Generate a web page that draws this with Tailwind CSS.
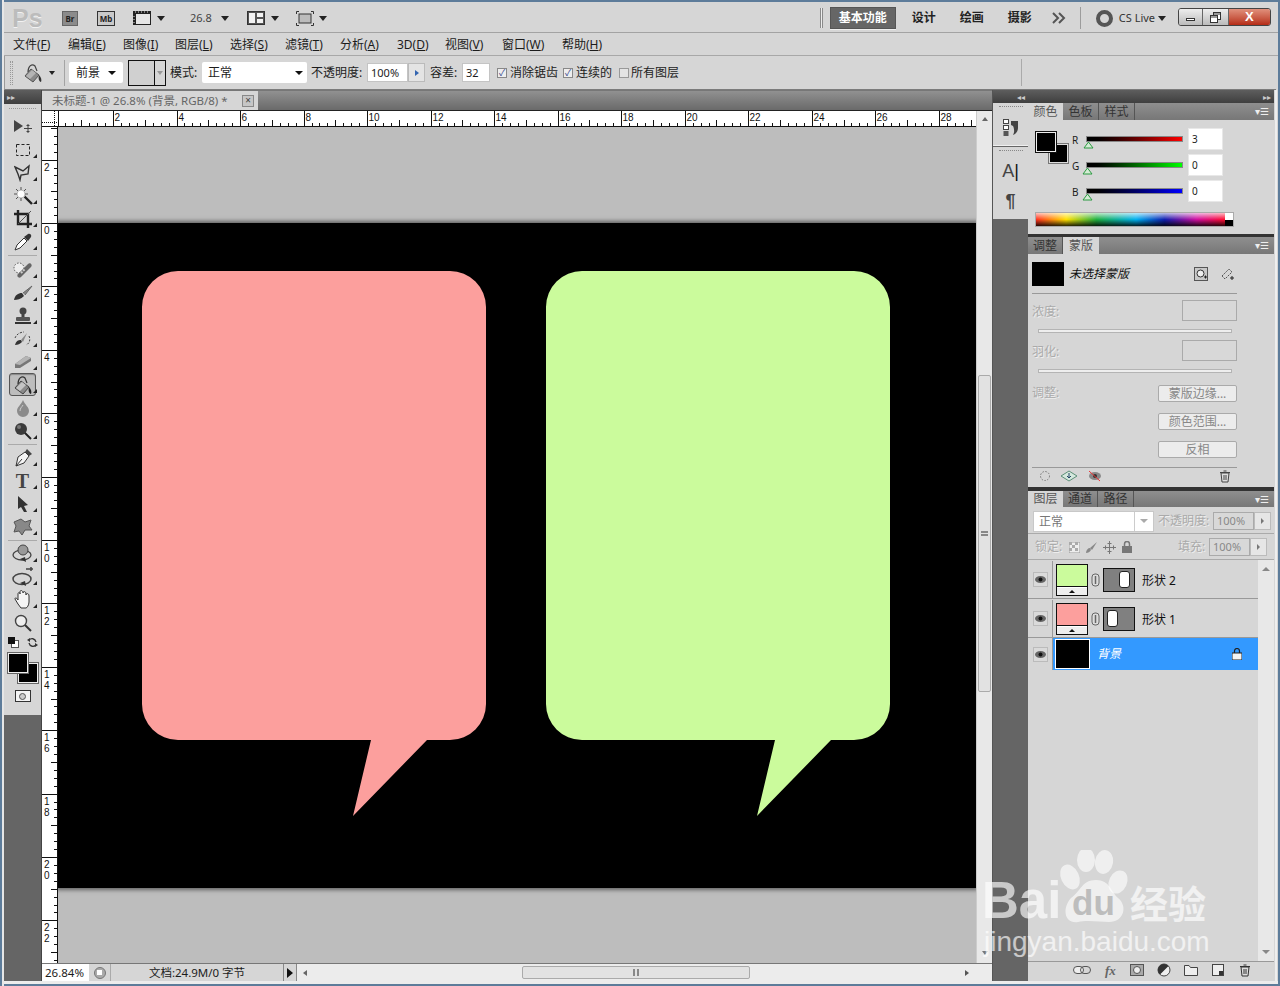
<!DOCTYPE html>
<html lang="zh-CN">
<head>
<meta charset="UTF-8" />
<title>Photoshop CS5</title>
<script src="https://cdn.jsdelivr.net/npm/@tailwindcss/browser@4"></script>
</head>
<body class="m-0 overflow-hidden">
<div class="relative w-[1280px] h-[986px] overflow-hidden flex flex-col bg-[#d6d6d6] text-[12px] text-[#1c1c1c] font-['Noto_Sans','Noto_Sans_CJK_SC',sans-serif]">

  <!-- title bar -->
  <div class="h-[33px] shrink-0 flex items-center border-t-2 border-t-[#5d7c9a] border-b border-b-[#a3a3a3] pl-[12px] pt-[2px]">
    <span class="w-[50px] text-[25px] leading-none font-bold text-[#bcbcbc] font-['Liberation_Sans',sans-serif] [text-shadow:0_1px_0_#f2f2f2]">Ps</span>
    <span class="w-[16px] h-[15px] bg-[#8b8b8b] border border-[#666] text-[8px] leading-[13px] font-bold text-center text-[#222]">Br</span>
    <span class="ml-[19px] w-[18px] h-[15px] bg-[#c9c9c9] border border-[#333] text-[8px] leading-[13px] font-bold text-center text-[#222]">Mb</span>
    <svg class="ml-[18px]" width="18" height="14" viewBox="0 0 18 14"><rect x="0.5" y="0.5" width="17" height="13" fill="#e6e6e6" stroke="#222"/><rect x="0" y="0" width="18" height="3" fill="#222"/><rect x="0" y="3" width="3" height="11" fill="#222"/><path d="M2 1h1M5 1h1M8 1h1M11 1h1M14 1h1M1 5v1M1 8v1M1 11v1" stroke="#ddd"/></svg>
    <span class="ml-[6px] w-0 h-0 border-x-[4px] border-x-transparent border-t-[5px] border-t-[#222]"></span>
    <span class="ml-[25px] text-[11px] text-[#444]">26.8</span>
    <span class="ml-[9px] w-0 h-0 border-x-[4px] border-x-transparent border-t-[5px] border-t-[#222]"></span>
    <svg class="ml-[18px]" width="18" height="14" viewBox="0 0 18 14"><rect x="0.5" y="0.5" width="17" height="13" fill="#555" stroke="#333"/><rect x="2" y="2" width="6" height="10" fill="#f2f2f2"/><rect x="10" y="2" width="6" height="4" fill="#f2f2f2"/><rect x="10" y="8" width="6" height="4" fill="#f2f2f2"/></svg>
    <span class="ml-[6px] w-0 h-0 border-x-[4px] border-x-transparent border-t-[5px] border-t-[#222]"></span>
    <svg class="ml-[17px]" width="18" height="15" viewBox="0 0 18 15"><path d="M0.5 3V0.5H3M15 0.5h2.5V3M17.5 12v2.5H15M3 14.5H0.5V12" fill="none" stroke="#333"/><rect x="3" y="3" width="12" height="9" fill="#bcbcbc" stroke="#333"/></svg>
    <span class="ml-[5px] w-0 h-0 border-x-[4px] border-x-transparent border-t-[5px] border-t-[#222]"></span>

    <span class="ml-[493px] w-[3px] h-[20px] border-x border-x-[#8a8a8a] bg-[#eee]"></span>
    <span class="ml-[7px] w-[66px] h-[22px] bg-[#666] border border-[#555] text-white font-bold text-center leading-[20px] shadow-[0_1px_0_#eee]">基本功能</span>
    <span class="ml-[16px] w-[24px] font-bold text-[#222]">设计</span>
    <span class="ml-[24px] w-[24px] font-bold text-[#222]">绘画</span>
    <span class="ml-[24px] w-[24px] font-bold text-[#222]">摄影</span>
    <svg class="ml-[20px]" width="14" height="12" viewBox="0 0 14 12"><path d="M1 1l5 5-5 5M7 1l5 5-5 5" fill="none" stroke="#555" stroke-width="2"/></svg>
    <span class="ml-[14px] w-px h-[22px] bg-[#9c9c9c]"></span>
    <span class="ml-[15px] w-[17px] h-[17px] rounded-full border-[4px] border-[#555] bg-[#d6d6d6]"></span>
    <span class="ml-[6px] w-[38px] text-[11px] text-[#333] whitespace-nowrap">CS Live</span>
    <span class="ml-[1px] w-0 h-0 border-x-[4px] border-x-transparent border-t-[5px] border-t-[#222]"></span>
    <div class="ml-[12px] w-[93px] h-[18px] mt-[-2px] flex rounded-[3px] border border-[#444] overflow-hidden">
      <span class="w-[24px] flex items-end justify-center pb-[4px] bg-gradient-to-b from-[#eee] to-[#bbb] border-r border-r-[#666]"><span class="w-[9px] h-[3px] border border-[#333] bg-white"></span></span>
      <span class="w-[26px] flex items-center justify-center bg-gradient-to-b from-[#eee] to-[#bbb] border-r border-r-[#666]"><svg width="11" height="11" viewBox="0 0 11 11"><rect x="3.5" y="0.5" width="7" height="7" fill="#fff" stroke="#333"/><rect x="0.5" y="3.5" width="7" height="7" fill="#fff" stroke="#333"/><path d="M1 5h6M4 2h6" stroke="#333"/></svg></span>
      <span class="flex-1 text-center text-white font-bold text-[13px] leading-[16px] bg-gradient-to-b from-[#e0907c] to-[#b52a14] font-['Liberation_Sans',sans-serif]">X</span>
    </div>
  </div>

  <!-- menu bar -->
  <div class="h-[23px] shrink-0 flex items-center pl-[13px] pt-[2px] border-b border-b-[#a8a8a8] whitespace-nowrap">
    <span class="w-[55px]">文件(<u>F</u>)</span>
    <span class="w-[55px]">编辑(<u>E</u>)</span>
    <span class="w-[52px]">图像(<u>I</u>)</span>
    <span class="w-[55px]">图层(<u>L</u>)</span>
    <span class="w-[55px]">选择(<u>S</u>)</span>
    <span class="w-[55px]">滤镜(<u>T</u>)</span>
    <span class="w-[57px]">分析(<u>A</u>)</span>
    <span class="w-[48px]">3D(<u>D</u>)</span>
    <span class="w-[57px]">视图(<u>V</u>)</span>
    <span class="w-[60px]">窗口(<u>W</u>)</span>
    <span>帮助(<u>H</u>)</span>
  </div>

  <!-- options bar -->
  <div class="h-[34px] shrink-0 ml-[4px] mr-[4px] flex items-center border-l border-l-[#9a9a9a] border-b border-b-[#7c7c7c] whitespace-nowrap">
    <span class="ml-[5px] w-[3px] h-[24px] border-x border-dotted border-[#999]"></span>
    <svg class="ml-[10px]" width="20" height="20" viewBox="0 0 20 20"><path d="M8 6 L16 12 L10 19 L2 13Z" fill="#8a8a8a" stroke="#555"/><path d="M3 13 L9 7 L13 10 L7 16Z" fill="#b4b4b4"/><path d="M5 9 C5 3 9 0 12 3 L14 8" fill="none" stroke="#444" stroke-width="1.2"/><path d="M16 12 C18 14 19 17 18 19 C16 19 15 15 16 12Z" fill="#333"/></svg>
    <span class="ml-[6px] w-0 h-0 border-x-[3px] border-x-transparent border-t-[4px] border-t-[#222]"></span>
    <span class="ml-[9px] w-px h-[26px] bg-[#a4a4a4]"></span>
    <div class="ml-[4px] w-[54px] h-[21px] bg-white rounded-[2px] flex items-center justify-between pl-[7px] pr-[7px]"><span>前景</span><span class="w-0 h-0 border-x-[4px] border-x-transparent border-t-[4px] border-t-[#111]"></span></div>
    <div class="ml-[5px] w-[38px] h-[26px] border border-[#111] flex"><span class="w-[26px] h-full bg-[#d0d0d0] border-r border-r-[#111]"></span><span class="flex-1 flex items-center justify-center"><span class="w-0 h-0 border-x-[3px] border-x-transparent border-t-[4px] border-t-[#999]"></span></span></div>
    <span class="ml-[4px] w-[32px]">模式:</span>
    <div class="w-[105px] h-[21px] bg-white rounded-[2px] flex items-center justify-between pl-[6px] pr-[4px]"><span>正常</span><span class="w-0 h-0 border-x-[4px] border-x-transparent border-t-[4px] border-t-[#111]"></span></div>
    <span class="ml-[4px] w-[56px]">不透明度:</span>
    <div class="w-[41px] h-[19px] bg-white border border-[#c4c4c4] text-[11px] leading-[17px] pl-[3px]">100%</div>
    <div class="w-[17px] h-[19px] bg-[#e4e4e4] border border-[#bbb] flex items-center justify-center"><span class="w-0 h-0 border-y-[3px] border-y-transparent border-l-[4px] border-l-[#3465b0]"></span></div>
    <span class="ml-[5px] w-[32px]">容差:</span>
    <div class="w-[28px] h-[19px] bg-white border border-[#c4c4c4] text-[11px] leading-[17px] pl-[3px]">32</div>
    <span class="ml-[7px] w-[10px] h-[10px] bg-[#eee] border border-[#888] text-[#33478f] text-[9px] leading-[8px] text-center">✓</span>
    <span class="ml-[3px] w-[47px]">消除锯齿</span>
    <span class="ml-[6px] w-[10px] h-[10px] bg-[#eee] border border-[#888] text-[#33478f] text-[9px] leading-[8px] text-center">✓</span>
    <span class="ml-[3px] w-[36px]">连续的</span>
    <span class="ml-[7px] w-[10px] h-[10px] bg-[#e4e4e4] border border-[#999]"></span>
    <span class="ml-[2px] w-[49px]">所有图层</span>
    <span class="ml-[341px] w-px h-[27px] bg-[#aaa]"></span>
  </div>

  <!-- work area -->
  <div class="h-[891px] shrink-0 flex ml-[4px]">

    <!-- tools -->
    <div class="w-[38px] shrink-0 flex flex-col bg-[#656565] border-r border-r-[#444]">
      <div class="h-[14px] shrink-0 bg-gradient-to-b from-[#5e5e5e] to-[#3f3f3f] text-[#ccc] text-[8px] leading-[13px] pl-[3px]">▸▸</div>
      <div class="h-[611px] shrink-0 bg-[#d6d6d6] flex flex-col">
        <div class="h-[11px] shrink-0 mx-[5px] pt-[4px]"><div class="border-t border-dotted border-t-[#999]"></div></div>
        <div class="h-[23px] shrink-0 flex items-center justify-center relative"><svg width="20" height="16" viewBox="0 0 20 16"><path d="M1 1 L10 7 L1 13Z" fill="#444"/><path d="M15 5v9M11 9.5h8M13.5 6.5h3M13.5 12.5h3" stroke="#444" fill="none"/></svg></div>
        <div class="h-[23px] shrink-0 flex items-center justify-center relative"><svg width="16" height="14" viewBox="0 0 16 14"><rect x="1.5" y="1.5" width="13" height="11" fill="none" stroke="#222" stroke-dasharray="3 2"/></svg><i class="absolute right-[4px] bottom-[3px] border-b-[4px] border-l-[4px] border-b-[#222] border-l-transparent"></i></div>
        <div class="h-[23px] shrink-0 flex items-center justify-center relative"><svg width="18" height="18" viewBox="0 0 18 18"><path d="M1 3 L9 7 L15 2 L14 10 L7 11 L6 16 L4 10Z" fill="none" stroke="#333" stroke-width="1.4"/></svg><i class="absolute right-[4px] bottom-[3px] border-b-[4px] border-l-[4px] border-b-[#222] border-l-transparent"></i></div>
        <div class="h-[23px] shrink-0 flex items-center justify-center relative"><svg width="20" height="20" viewBox="0 0 20 20"><path d="M11 10 L19 18" stroke="#222" stroke-width="2.4"/><circle cx="8" cy="8" r="4" fill="#fff" stroke="#bbb"/><path d="M8 1v3M8 12v3M1 8h3M12 8h3M3 3l2 2M13 3l-2 2M3 13l2-2" stroke="#555"/></svg><i class="absolute right-[4px] bottom-[3px] border-b-[4px] border-l-[4px] border-b-[#222] border-l-transparent"></i></div>
        <div class="h-[23px] shrink-0 flex items-center justify-center relative"><svg width="18" height="18" viewBox="0 0 18 18"><path d="M4 0v14h14M0 4h14v14" fill="none" stroke="#222" stroke-width="2.4"/><path d="M4 14 L17 1" stroke="#555"/></svg><i class="absolute right-[4px] bottom-[3px] border-b-[4px] border-l-[4px] border-b-[#222] border-l-transparent"></i></div>
        <div class="h-[23px] shrink-0 flex items-center justify-center relative"><svg width="18" height="18" viewBox="0 0 18 18"><path d="M1 17 L3 12 L10 5 L13 8 L6 15Z" fill="#fff" stroke="#333"/><path d="M10 4 L14 8 L17 4 C18 2 16 0 14 1Z" fill="#333"/></svg><i class="absolute right-[4px] bottom-[3px] border-b-[4px] border-l-[4px] border-b-[#222] border-l-transparent"></i></div>
        <div class="h-[5px] shrink-0 flex items-center px-[4px]"><span class="h-px w-full bg-[#aaa]"></span></div>
        <div class="h-[23px] shrink-0 flex items-center justify-center relative"><svg width="20" height="18" viewBox="0 0 20 18"><circle cx="6" cy="7" r="5" fill="#eee" stroke="#555" stroke-dasharray="1.5 1.5"/><path d="M5 13 L15 3 C17 1 20 4 18 6 L8 16 C6 18 3 15 5 13Z" fill="#666"/><path d="M8 12l4-4" stroke="#ccc" stroke-width="2" stroke-dasharray="2 1"/></svg><i class="absolute right-[4px] bottom-[3px] border-b-[4px] border-l-[4px] border-b-[#222] border-l-transparent"></i></div>
        <div class="h-[23px] shrink-0 flex items-center justify-center relative"><svg width="20" height="16" viewBox="0 0 20 16"><path d="M1 15 C2 10 5 8 9 8 L11 11 C8 14 4 15 1 15Z" fill="#333"/><path d="M10 8 L19 1 L12 10" fill="#888" stroke="#666"/></svg><i class="absolute right-[4px] bottom-[3px] border-b-[4px] border-l-[4px] border-b-[#222] border-l-transparent"></i></div>
        <div class="h-[23px] shrink-0 flex items-center justify-center relative"><svg width="18" height="18" viewBox="0 0 18 18"><circle cx="9" cy="4" r="3.5" fill="#444"/><rect x="7.5" y="6" width="3" height="5" fill="#444"/><rect x="2" y="10" width="14" height="4" rx="1" fill="#555"/><rect x="1" y="15" width="16" height="2" fill="#333"/></svg><i class="absolute right-[4px] bottom-[3px] border-b-[4px] border-l-[4px] border-b-[#222] border-l-transparent"></i></div>
        <div class="h-[23px] shrink-0 flex items-center justify-center relative"><svg width="18" height="16" viewBox="0 0 18 16"><path d="M1 14 C2 10 4 9 7 9 L8 11 C6 13 4 14 1 14Z" fill="#333"/><path d="M7 9 L13 2 L9 11" fill="#888"/><path d="M1 7 C3 2 8 1 10 1M15 5 C17 9 15 13 12 14" fill="none" stroke="#444" stroke-dasharray="2 1.5"/></svg><i class="absolute right-[4px] bottom-[3px] border-b-[4px] border-l-[4px] border-b-[#222] border-l-transparent"></i></div>
        <div class="h-[23px] shrink-0 flex items-center justify-center relative"><svg width="18" height="14" viewBox="0 0 18 14"><path d="M1 9 L12 1 L17 3 L17 6 L6 13 L1 13Z" fill="#777"/><path d="M1 9 L12 1 L17 3 L6 10Z" fill="#b5b5b5"/></svg><i class="absolute right-[4px] bottom-[3px] border-b-[4px] border-l-[4px] border-b-[#222] border-l-transparent"></i></div>
        <div class="h-[23px] shrink-0 flex items-center justify-center relative"><span class="absolute inset-x-[5px] inset-y-0 border border-[#555] rounded-[3px] bg-[#bdbdbd] shadow-[inset_0_1px_1px_#888]"></span><svg class="relative" width="20" height="20" viewBox="0 0 20 20"><path d="M8 6 L16 12 L10 19 L2 13Z" fill="#8a8a8a" stroke="#444"/><path d="M3 13 L9 7 L13 10 L7 16Z" fill="#c4c4c4"/><path d="M5 9 C5 3 9 0 12 3 L14 8" fill="none" stroke="#333" stroke-width="1.2"/><path d="M16 12 C18 14 19 17 18 19 C16 19 15 15 16 12Z" fill="#222"/></svg><i class="absolute right-[4px] bottom-[3px] border-b-[4px] border-l-[4px] border-b-[#222] border-l-transparent"></i></div>
        <div class="h-[23px] shrink-0 flex items-center justify-center relative"><svg width="14" height="18" viewBox="0 0 14 18"><path d="M7 1 C9 6 13 8 13 12 A6 6 0 0 1 1 12 C1 8 5 6 7 1Z" fill="#8b8b8b"/><path d="M4 12 C4 9 6 8 7 6" stroke="#ccc" fill="none"/></svg><i class="absolute right-[4px] bottom-[3px] border-b-[4px] border-l-[4px] border-b-[#222] border-l-transparent"></i></div>
        <div class="h-[23px] shrink-0 flex items-center justify-center relative"><svg width="18" height="18" viewBox="0 0 18 18"><path d="M10 10 L17 17" stroke="#222" stroke-width="2"/><circle cx="7" cy="7" r="6" fill="#3b3b3b"/><circle cx="5" cy="5" r="2" fill="#777"/></svg><i class="absolute right-[4px] bottom-[3px] border-b-[4px] border-l-[4px] border-b-[#222] border-l-transparent"></i></div>
        <div class="h-[4px] shrink-0 flex items-center px-[4px]"><span class="h-px w-full bg-[#aaa]"></span></div>
        <div class="h-[23px] shrink-0 flex items-center justify-center relative"><svg width="18" height="18" viewBox="0 0 18 18"><path d="M2 17 L4 8 L11 3 L15 7 L10 14Z" fill="#f3f3f3" stroke="#333"/><path d="M2 17 L8 10" stroke="#333"/><path d="M11 3 L13 0 L18 5 L15 7Z" fill="#444"/></svg><i class="absolute right-[4px] bottom-[3px] border-b-[4px] border-l-[4px] border-b-[#222] border-l-transparent"></i></div>
        <div class="h-[23px] shrink-0 flex items-center justify-center relative"><span class="text-[20px] leading-none font-bold text-[#444] font-['Liberation_Serif',serif]">T</span><i class="absolute right-[4px] bottom-[3px] border-b-[4px] border-l-[4px] border-b-[#222] border-l-transparent"></i></div>
        <div class="h-[23px] shrink-0 flex items-center justify-center relative"><svg width="14" height="18" viewBox="0 0 14 18"><path d="M2 1 L12 10 L8 11 L11 17 L8 17 L5 12 L2 14Z" fill="#333"/></svg><i class="absolute right-[4px] bottom-[3px] border-b-[4px] border-l-[4px] border-b-[#222] border-l-transparent"></i></div>
        <div class="h-[23px] shrink-0 flex items-center justify-center relative"><svg width="20" height="18" viewBox="0 0 20 18"><path d="M8 1 L12 4 L18 2 L16 8 L19 12 L12 12 L9 17 L6 13 L1 14 L3 8 L1 4Z" fill="#888" stroke="#555"/></svg><i class="absolute right-[4px] bottom-[3px] border-b-[4px] border-l-[4px] border-b-[#222] border-l-transparent"></i></div>
        <div class="h-[4px] shrink-0 flex items-center px-[4px]"><span class="h-px w-full bg-[#aaa]"></span></div>
        <div class="h-[23px] shrink-0 flex items-center justify-center relative"><svg width="22" height="20" viewBox="0 0 22 20"><ellipse cx="10" cy="11" rx="9" ry="5" fill="none" stroke="#444" stroke-width="1.3"/><circle cx="11" cy="6" r="5" fill="#999" stroke="#444"/><path d="M8 15l6 3-1-5z" fill="#333"/></svg><i class="absolute right-[4px] bottom-[3px] border-b-[4px] border-l-[4px] border-b-[#222] border-l-transparent"></i></div>
        <div class="h-[23px] shrink-0 flex items-center justify-center relative"><svg width="22" height="20" viewBox="0 0 22 20"><ellipse cx="10" cy="12" rx="9" ry="5.5" fill="none" stroke="#444" stroke-width="1.5"/><path d="M14 2h7M19 0v4" stroke="#444" stroke-width="1.5"/><path d="M8 16l6 3-1-5z" fill="#333"/></svg><i class="absolute right-[4px] bottom-[3px] border-b-[4px] border-l-[4px] border-b-[#222] border-l-transparent"></i></div>
        <div class="h-[23px] shrink-0 flex items-center justify-center relative"><svg width="18" height="20" viewBox="0 0 18 20"><path d="M4 14 L1 9 C1 7 3 8 4 10 L4 4 C4 2 6 2 6 4 L6 2 C6 0 8 0 9 2 L9 3 C9 1 12 1 12 4 L12 5 C12 3 15 3 15 6 L15 12 C15 15 13 18 12 18 L7 18Z" fill="#f4f4f4" stroke="#333"/></svg><i class="absolute right-[4px] bottom-[3px] border-b-[4px] border-l-[4px] border-b-[#222] border-l-transparent"></i></div>
        <div class="h-[23px] shrink-0 flex items-center justify-center"><svg width="18" height="18" viewBox="0 0 18 18"><circle cx="7" cy="7" r="5.5" fill="#eee" stroke="#444" stroke-width="1.4"/><path d="M11 11 L17 17" stroke="#333" stroke-width="2"/></svg></div>
        <div class="h-[16px] shrink-0 flex items-center pl-[4px] gap-[8px]">
          <svg width="11" height="11" viewBox="0 0 11 11"><rect x="3.5" y="3.5" width="7" height="7" fill="#fff" stroke="#555"/><rect x="0" y="0" width="7" height="7" fill="#111"/></svg>
          <svg width="11" height="11" viewBox="0 0 11 11"><path d="M2 3 C4 1 8 1 9 5M9 8 C7 10 3 10 2 6" fill="none" stroke="#333" stroke-width="1.3"/><path d="M0 3l3-2v4zM11 8l-3 2V6z" fill="#333"/></svg>
        </div>
        <div class="relative h-[35px] shrink-0">
          <span class="absolute left-[14px] top-[13px] w-[20px] h-[20px] bg-black border border-[#eee] outline outline-[#666]"></span>
          <span class="absolute left-[4px] top-[3px] w-[20px] h-[20px] bg-black border border-[#eee] outline outline-[#666]"></span>
        </div>
        <div class="h-[22px] shrink-0 flex items-start justify-center pt-[5px]"><span class="w-[16px] h-[12px] bg-[#f4f4f4] border border-[#333] flex items-center justify-center"><span class="w-[7px] h-[7px] rounded-full border border-[#555] bg-[#ccc]"></span></span></div>
      </div>
    </div>

    <!-- document -->
    <div class="w-[950px] shrink-0 flex flex-col">
      <div class="h-[20px] shrink-0 flex items-end bg-gradient-to-b from-[#919191] to-[#6a6a6a] border-t border-t-[#777]">
        <div class="w-[216px] h-[19px] bg-[#d6d6d6] flex items-center pl-[10px] text-[11.5px] text-[#666] whitespace-nowrap">
          <span class="w-[190px]">未标题-1 @ 26.8% (背景, RGB/8) *</span>
          <span class="w-[12px] h-[12px] bg-[#c6c6c6] border border-[#888] text-[#444] text-[10px] leading-[9px] text-center">×</span>
        </div>
      </div>
      <div class="h-[17px] shrink-0 flex bg-white border-t border-t-[#222]">
        <svg id="rulerX" width="934" height="16" class="block"></svg>
        <div class="w-[16px] bg-[#e8e8e8] flex justify-center pt-[6px] border-l border-l-[#ccc]"><span class="w-0 h-0 border-x-[3px] border-x-transparent border-b-[4px] border-b-[#666]"></span></div>
      </div>
      <div class="flex h-[836px] shrink-0">
        <svg id="rulerY" width="16" height="836" class="block shrink-0 bg-white"></svg>
        <!-- canvas -->
        <div class="w-[918px] shrink-0 flex flex-col bg-[#bdbdbd] overflow-hidden">
          <div class="h-[96px] shrink-0"></div>
          <div class="h-[665px] shrink-0 bg-black shadow-[0_0_4px_2px_rgba(70,70,70,0.75)]">
            <svg width="918" height="665" viewBox="0 0 918 665" class="block">
              <path d="M120 48H392A36 36 0 0 1 428 84V481A36 36 0 0 1 392 517H369L295 593L313 517H120A36 36 0 0 1 84 481V84A36 36 0 0 1 120 48Z" fill="#fc9f9d"/>
              <path d="M524 48H796A36 36 0 0 1 832 84V481A36 36 0 0 1 796 517H773L699 593L717 517H524A36 36 0 0 1 488 481V84A36 36 0 0 1 524 48Z" fill="#cbfb9c"/>
            </svg>
          </div>
        </div>
        <!-- v scrollbar -->
        <div class="w-[16px] shrink-0 flex flex-col items-center bg-[#e8e8e8] border-l border-l-[#ccc]">
          <div class="w-[13px] mt-[248px] h-[317px] shrink-0 bg-[#e2e2e2] border border-[#aaa] rounded-[2px] flex items-center justify-center"><span class="w-[7px] h-[5px] border-y-2 border-y-[#888]"></span></div>
          <span class="mt-[259px] w-0 h-0 border-x-[3px] border-x-transparent border-t-[4px] border-t-[#777]"></span>
        </div>
      </div>
      <!-- status bar -->
      <div class="h-[18px] shrink-0 flex border-t border-t-[#777] text-[11.5px] leading-[17px]">
        <span class="w-[47px] bg-white pl-[3px]">26.84%</span>
        <span class="w-[22px] flex items-center justify-center border-r border-r-[#aaa]"><span class="w-[12px] h-[12px] rounded-full bg-[#aaa] border border-[#777] flex items-center justify-center"><span class="w-[5px] h-[5px] bg-white"></span></span></span>
        <span class="w-[172px] text-center">文档:24.9M/0 字节</span>
        <span class="w-[14px] flex items-center justify-center border-x border-x-[#888]"><span class="w-0 h-0 border-y-[5px] border-y-transparent border-l-[6px] border-l-[#111]"></span></span>
        <div class="w-[695px] flex items-center bg-[#ececec]">
          <span class="ml-[6px] w-0 h-0 border-y-[3px] border-y-transparent border-r-[4px] border-r-[#666]"></span>
          <div class="ml-[215px] w-[228px] h-[13px] bg-[#e2e2e2] border border-[#aaa] rounded-[2px] flex items-center justify-center"><span class="w-[6px] h-[7px] border-x-2 border-x-[#888]"></span></div>
          <span class="ml-[215px] w-0 h-0 border-y-[3px] border-y-transparent border-l-[4px] border-l-[#555]"></span>
        </div>
      </div>
    </div>

    <!-- dock -->
    <div class="w-[36px] shrink-0 flex flex-col bg-[#656565] border-l border-l-[#555]">
      <div class="h-[13px] shrink-0 bg-gradient-to-b from-[#5e5e5e] to-[#3f3f3f] text-[#ccc] text-[8px] leading-[13px] text-right pr-[3px]">◂◂</div>
      <div class="h-[43px] shrink-0 bg-[#d6d6d6] border-b border-b-[#f0f0f0] flex flex-col items-center">
        <span class="w-[24px] mt-[3px] border-t border-dotted border-t-[#888]"></span>
        <svg class="mt-[12px]" width="16" height="18" viewBox="0 0 16 18"><rect x="0.5" y="0.5" width="5" height="4" fill="#fff" stroke="#444"/><rect x="0.5" y="6.5" width="5" height="4" fill="#fff" stroke="#444"/><rect x="0.5" y="12" width="5" height="5" fill="#555"/><path d="M8 2h7v7C15 12 13 15 10 16 C12 13 11 9 10 7L8 6Z" fill="#444"/></svg>
      </div>
      <div class="h-[72px] shrink-0 bg-[#d6d6d6] flex flex-col items-center mt-px">
        <span class="w-[24px] mt-[3px] border-t border-dotted border-t-[#888]"></span>
        <span class="mt-[8px] h-[24px] text-[18px] leading-[24px] text-[#444] font-['Liberation_Sans',sans-serif]">A<span class="font-light text-[#111]">|</span></span>
        <span class="mt-[8px] text-[18px] leading-[20px] font-bold text-[#444] font-['Liberation_Sans',sans-serif]">¶</span>
      </div>
    </div>

    <!-- panels -->
    <div class="w-[246px] shrink-0 flex flex-col">
      <div class="h-[13px] shrink-0 bg-gradient-to-b from-[#5e5e5e] to-[#3f3f3f] text-[#ccc] text-[8px] leading-[13px] text-right pr-[3px]">▸▸</div>

      <!-- colour panel -->
      <div class="h-[17px] shrink-0 flex bg-gradient-to-b from-[#8f8f8f] to-[#777] text-[#333] leading-[17px] text-center">
        <span class="w-[35px] bg-[#d6d6d6] text-[#555]">颜色</span>
        <span class="w-[36px] border-r border-r-[#555]">色板</span>
        <span class="w-[36px] border-r border-r-[#555]">样式</span>
        <span class="ml-auto pr-[5px] text-[10px] text-[#eee]">▾☰</span>
      </div>
      <div class="h-[114px] shrink-0 flex flex-col">
        <div class="h-[82px] shrink-0 flex">
          <div class="relative w-[44px]">
            <span class="absolute left-[21px] top-[24px] w-[19px] h-[19px] bg-black outline outline-[#777] border border-[#ddd]"></span>
            <span class="absolute left-[8px] top-[12px] w-[20px] h-[20px] bg-black border border-[#eee] outline outline-[#111]"></span>
          </div>
          <div class="flex-1 flex flex-col pt-[8px] gap-[4px]">
            <div class="h-[22px] flex items-start"><span class="w-[14px] text-[10px] leading-[24px]">R</span><div class="relative w-[97px] h-[6px] mt-[8px] bg-gradient-to-r from-black to-[#ff0000] border border-[#888]"><svg class="absolute left-[-4px] top-[4px]" width="11" height="8" viewBox="0 0 11 8"><path d="M5.500 1L10 7H1Z" fill="#d5ecd5" stroke="#2a9a40"/></svg></div><span class="ml-[5px] w-[35px] h-[22px] bg-white border border-[#e8e8e8] text-[10px] leading-[20px] pl-[3px]">3</span></div>
            <div class="h-[22px] flex items-start"><span class="w-[14px] text-[10px] leading-[24px]">G</span><div class="relative w-[97px] h-[6px] mt-[8px] bg-gradient-to-r from-black to-[#00ff00] border border-[#888]"><svg class="absolute left-[-5px] top-[4px]" width="11" height="8" viewBox="0 0 11 8"><path d="M5.500 1L10 7H1Z" fill="#d5ecd5" stroke="#2a9a40"/></svg></div><span class="ml-[5px] w-[35px] h-[22px] bg-white border border-[#e8e8e8] text-[10px] leading-[20px] pl-[3px]">0</span></div>
            <div class="h-[22px] flex items-start"><span class="w-[14px] text-[10px] leading-[24px]">B</span><div class="relative w-[97px] h-[6px] mt-[8px] bg-gradient-to-r from-black to-[#0000ff] border border-[#888]"><svg class="absolute left-[-5px] top-[4px]" width="11" height="8" viewBox="0 0 11 8"><path d="M5.500 1L10 7H1Z" fill="#d5ecd5" stroke="#2a9a40"/></svg></div><span class="ml-[5px] w-[35px] h-[22px] bg-white border border-[#e8e8e8] text-[10px] leading-[20px] pl-[3px]">0</span></div>
          </div>
        </div>
        <div class="ml-[7px] mt-[10px] w-[199px] h-[15px] flex border border-[#aaa]">
          <div class="relative flex-1 bg-[linear-gradient(90deg,#ff3020,#ffe000_16%,#20b040_32%,#00b0f0_53%,#1020b0_68%,#d010a0_85%,#ff1030)]"><span class="absolute inset-0 bg-gradient-to-b from-white/70 via-transparent to-black/85"></span></div>
          <div class="w-[8px] flex flex-col"><span class="h-1/2 bg-white"></span><span class="h-1/2 bg-black"></span></div>
        </div>
      </div>
      <div class="h-[3px] shrink-0 bg-[#333]"></div>

      <!-- masks panel -->
      <div class="h-[17px] shrink-0 flex bg-gradient-to-b from-[#8f8f8f] to-[#777] text-[#333] leading-[17px] text-center">
        <span class="w-[35px] border-r border-r-[#555]">调整</span>
        <span class="w-[36px] bg-[#d6d6d6] text-[#555]">蒙版</span>
        <span class="ml-auto pr-[5px] text-[10px] text-[#eee]">▾☰</span>
      </div>
      <div class="h-[233px] shrink-0 flex flex-col pl-[4px] pr-[37px] text-[#aaa]">
        <div class="h-[40px] shrink-0 flex items-center border-b border-b-[#999]">
          <span class="w-[32px] h-[24px] bg-black"></span>
          <span class="ml-[5px] w-[122px] italic text-[#111]">未选择蒙版</span>
          <svg class="ml-[3px]" width="14" height="14" viewBox="0 0 14 14"><rect x="0.5" y="0.5" width="13" height="13" fill="#c8c8c8" stroke="#555"/><circle cx="6.500" cy="6.500" r="3.500" fill="#eee" stroke="#333"/><path d="M10 10h3M11.500 8.500v3" stroke="#222"/></svg>
          <svg class="ml-[12px]" width="14" height="14" viewBox="0 0 14 14"><path d="M2 9 L9 2 L12 5 L5 12Z" fill="none" stroke="#555" stroke-dasharray="2 1"/><path d="M10 11h4M12 9v4" stroke="#222"/></svg>
        </div>
        <div class="h-[46px] shrink-0 flex flex-col pt-[6px]">
          <div class="h-[25px] shrink-0 flex justify-between"><span class="[text-shadow:1px_1px_0_#eee] leading-[24px]">浓度:</span><span class="w-[55px] h-[21px] border border-[#aaa] bg-[#d8d8d8]"></span></div>
          <span class="mt-[4px] ml-[6px] w-[194px] h-[4px] bg-[#eee] border border-[#b4b4b4]"></span>
        </div>
        <div class="h-[40px] shrink-0 flex flex-col">
          <div class="h-[26px] shrink-0 flex justify-between"><span class="[text-shadow:1px_1px_0_#eee] leading-[24px]">羽化:</span><span class="w-[55px] h-[21px] border border-[#aaa] bg-[#d8d8d8]"></span></div>
          <span class="mt-[3px] ml-[6px] w-[194px] h-[4px] bg-[#eee] border border-[#b4b4b4]"></span>
        </div>
        <div class="h-[88px] shrink-0 flex justify-between pt-[2px] border-b border-b-[#999]">
          <span class="[text-shadow:1px_1px_0_#eee] leading-[22px]">调整:</span>
          <div class="flex flex-col gap-[11px] pt-[3px] text-[#888] text-center leading-[15px]">
            <span class="w-[79px] h-[17px] bg-[#ececec] border border-[#aaa] rounded-[2px]">蒙版边缘...</span>
            <span class="w-[79px] h-[17px] bg-[#ececec] border border-[#aaa] rounded-[2px]">颜色范围...</span>
            <span class="w-[79px] h-[17px] bg-[#ececec] border border-[#aaa] rounded-[2px]">反相</span>
          </div>
        </div>
        <div class="h-[16px] shrink-0 flex items-center pl-[7px]">
          <svg width="12" height="12" viewBox="0 0 12 12"><circle cx="6" cy="6" r="4.500" fill="none" stroke="#777" stroke-dasharray="1.500 1.500"/></svg>
          <svg class="ml-[9px]" width="18" height="12" viewBox="0 0 18 12"><path d="M1 6 L9 1 L17 6 L9 11Z" fill="#d5e8dd" stroke="#5d8f78"/><path d="M9 3v5M7 6l2 2 2-2" stroke="#246" fill="none"/></svg>
          <svg class="ml-[10px]" width="14" height="12" viewBox="0 0 14 12"><ellipse cx="7" cy="6" rx="6" ry="4" fill="#888"/><circle cx="7" cy="6" r="2" fill="#333"/><path d="M1 1 L12 11" stroke="#e33"/></svg>
          <svg class="ml-[117px]" width="12" height="13" viewBox="0 0 12 13"><path d="M2 3h8l-1 9H3Z" fill="#ddd" stroke="#444"/><path d="M1 2.500h10M4.500 1h3M5 5v5M7 5v5" stroke="#444"/></svg>
        </div>
      </div>
      <div class="h-[4px] shrink-0 bg-[#333]"></div>

      <!-- layers panel -->
      <div class="h-[16px] shrink-0 flex bg-gradient-to-b from-[#8f8f8f] to-[#777] text-[#333] leading-[16px] text-center">
        <span class="w-[35px] bg-[#d6d6d6] text-[#555]">图层</span>
        <span class="w-[35px] border-r border-r-[#555]">通道</span>
        <span class="w-[36px] border-r border-r-[#555]">路径</span>
        <span class="ml-auto pr-[5px] text-[10px] text-[#eee]">▾☰</span>
      </div>
      <div class="flex-1 flex flex-col">
        <div class="h-[27px] shrink-0 flex items-center pl-[5px] pt-[2px] border-b border-b-[#aaa] text-[#aaa]">
          <div class="w-[121px] h-[21px] bg-white border border-[#c8c8c8] flex text-[#777] leading-[19px] pl-[5px]"><span class="flex-1 border-r border-r-[#ccc]">正常</span><span class="w-[18px] flex items-center justify-center"><span class="w-0 h-0 border-x-[4px] border-x-transparent border-t-[4px] border-t-[#aaa]"></span></span></div>
          <span class="ml-[4px] w-[55px] [text-shadow:1px_1px_0_#eee]">不透明度:</span>
          <span class="w-[41px] h-[18px] bg-[#d8d8d8] border border-[#aaa] text-[11px] leading-[16px] pl-[3px] text-[#888]">100%</span>
          <span class="w-[17px] h-[18px] bg-[#e6e6e6] border border-[#bbb] flex items-center justify-center"><span class="w-0 h-0 border-y-[3px] border-y-transparent border-l-[3px] border-l-[#777]"></span></span>
        </div>
        <div class="h-[26px] shrink-0 flex items-center pl-[7px] pt-[1px] border-b border-b-[#aaa] text-[#aaa]">
          <span class="w-[34px] [text-shadow:1px_1px_0_#eee]">锁定:</span>
          <svg width="11" height="11" viewBox="0 0 11 11"><rect width="11" height="11" fill="#eee" stroke="#999"/><path d="M0 0h3v3H0zM6 0h3v3H6zM3 3h3v3H3zM0 6h3v3H0zM6 6h3v3H6z" fill="#aaa"/></svg>
          <svg class="ml-[5px]" width="13" height="13" viewBox="0 0 13 13"><path d="M1 12 C1 9 3 7 5 7 L6 9 C5 11 3 12 1 12Z M5 7 L12 1 L7 9Z" fill="#888"/></svg>
          <svg class="ml-[5px]" width="13" height="13" viewBox="0 0 13 13"><path d="M6.500 0v13M0 6.500h13M4.500 2.500h4M4.500 10.500h4M2.500 4.500v4M10.500 4.500v4" stroke="#777" fill="none"/></svg>
          <svg class="ml-[6px]" width="10" height="12" viewBox="0 0 10 12"><rect y="5" width="10" height="7" fill="#777"/><path d="M2.500 5V3a2.500 2.500 0 0 1 5 0v2" fill="none" stroke="#777" stroke-width="1.5"/></svg>
          <span class="ml-[46px] w-[31px] [text-shadow:1px_1px_0_#eee]">填充:</span>
          <span class="w-[41px] h-[18px] bg-[#d8d8d8] border border-[#aaa] text-[11px] leading-[16px] pl-[3px] text-[#888]">100%</span>
          <span class="w-[17px] h-[18px] bg-[#e6e6e6] border border-[#bbb] flex items-center justify-center"><span class="w-0 h-0 border-y-[3px] border-y-transparent border-l-[3px] border-l-[#777]"></span></span>
        </div>
        <div class="flex-1 flex min-h-0">
          <div class="w-[230px] shrink-0 flex flex-col">
            <!-- layer rows -->
            <div class="h-[39px] shrink-0 flex items-center border-b border-b-[#999] text-[#111] pt-[1px]">
              <span class="w-[25px] h-[38px] border-r border-r-[#999] flex items-center justify-center"><svg width="15" height="15" viewBox="0 0 15 15"><rect x="0.500" y="0.500" width="14" height="14" fill="#dadada" stroke="#bbb"/><ellipse cx="7.500" cy="7.500" rx="5.500" ry="3.500" fill="#666"/><circle cx="7.500" cy="7.500" r="2" fill="#111"/></svg></span>
              <div class="ml-[3px] w-[32px] h-[32px] border border-[#111] flex flex-col"><span class="h-[22px] bg-[#cbfb9c] border-b border-b-[#111]"></span><span class="flex-1 bg-[#eee] flex items-center justify-center border-t border-[#fff]"><span class="w-0 h-0 border-x-[3px] border-x-transparent border-b-[3px] border-b-[#111]"></span></span></div>
              <svg class="ml-[3px]" width="9" height="14" viewBox="0 0 9 14"><rect x="1" y="1" width="7" height="12" rx="3" fill="#ddd" stroke="#666"/><path d="M4.500 3v8" stroke="#666" stroke-width="1.5"/></svg>
              <div class="ml-[3px] w-[32px] h-[24px] bg-[#808080] border border-[#111] flex justify-end pr-[4px] items-center"><span class="w-[11px] h-[17px] bg-white rounded-[3px] border border-[#222]"></span></div>
              <span class="ml-[7px] mt-[2px]">形状 2</span>
            </div>
            <div class="h-[39px] shrink-0 flex items-center border-b border-b-[#999] text-[#111] pt-[1px]">
              <span class="w-[25px] h-[37px] border-r border-r-[#999] flex items-center justify-center"><svg width="15" height="15" viewBox="0 0 15 15"><rect x="0.500" y="0.500" width="14" height="14" fill="#dadada" stroke="#bbb"/><ellipse cx="7.500" cy="7.500" rx="5.500" ry="3.500" fill="#666"/><circle cx="7.500" cy="7.500" r="2" fill="#111"/></svg></span>
              <div class="ml-[3px] w-[32px] h-[32px] border border-[#111] flex flex-col"><span class="h-[22px] bg-[#fc9f9d] border-b border-b-[#111]"></span><span class="flex-1 bg-[#eee] flex items-center justify-center border-t border-[#fff]"><span class="w-0 h-0 border-x-[3px] border-x-transparent border-b-[3px] border-b-[#111]"></span></span></div>
              <svg class="ml-[3px]" width="9" height="14" viewBox="0 0 9 14"><rect x="1" y="1" width="7" height="12" rx="3" fill="#ddd" stroke="#666"/><path d="M4.500 3v8" stroke="#666" stroke-width="1.5"/></svg>
              <div class="ml-[3px] w-[32px] h-[24px] bg-[#808080] border border-[#111] flex justify-start pl-[3px] items-center"><span class="w-[11px] h-[17px] bg-white rounded-[3px] border border-[#222]"></span></div>
              <span class="ml-[7px] mt-[2px]">形状 1</span>
            </div>
            <div class="h-[32px] shrink-0 flex items-center bg-[#3399ff]">
              <span class="w-[25px] h-[32px] bg-[#d6d6d6] border-r border-r-[#999] flex items-center justify-center"><svg width="15" height="15" viewBox="0 0 15 15"><rect x="0.500" y="0.500" width="14" height="14" fill="#dadada" stroke="#bbb"/><ellipse cx="7.500" cy="7.500" rx="5.500" ry="3.500" fill="#666"/><circle cx="7.500" cy="7.500" r="2" fill="#111"/></svg></span>
              <span class="ml-[2px] w-[35px] h-[30px] bg-black border border-white"></span>
              <span class="ml-[7px] w-[135px] italic text-white">背景</span>
              <svg width="10" height="12" viewBox="0 0 10 12"><rect y="5" width="10" height="7" fill="#f4f4f4" stroke="#222"/><path d="M2.500 5V3a2.500 2.500 0 0 1 5 0v2" fill="none" stroke="#222" stroke-width="1.2"/></svg>
            </div>
            <div class="flex-1"></div>
          </div>
          <div class="w-[16px] shrink-0 bg-[#e8e8e8] flex flex-col items-center justify-between py-[7px]">
            <span class="w-0 h-0 border-x-[4px] border-x-transparent border-b-[4px] border-b-[#888]"></span>
            <span class="w-0 h-0 border-x-[4px] border-x-transparent border-t-[4px] border-t-[#888]"></span>
          </div>
        </div>
        <div class="h-[20px] shrink-0 flex items-center border-t border-t-[#999] pl-[45px] pb-[3px] gap-[12px]">
          <svg width="18" height="8" viewBox="0 0 18 8"><rect x="0.500" y="0.500" width="10" height="7" rx="3.500" fill="#eee" stroke="#555"/><rect x="7.500" y="0.500" width="10" height="7" rx="3.500" fill="none" stroke="#555"/></svg>
          <span class="ml-[2px] w-[12px] text-[13px] leading-none italic font-bold text-[#666] font-['Liberation_Serif',serif]">fx</span>
          <svg class="ml-[1px]" width="14" height="12" viewBox="0 0 14 12"><rect x="0.500" y="0.500" width="13" height="11" fill="#aaa" stroke="#555"/><circle cx="7" cy="6" r="3.500" fill="#eee" stroke="#555"/></svg>
          <svg class="ml-[1px]" width="14" height="14" viewBox="0 0 14 14"><circle cx="7" cy="7" r="6" fill="#eee" stroke="#444"/><path d="M7 1A6 6 0 0 0 3 11.500L11.500 3A6 6 0 0 0 7 1Z" fill="#333"/></svg>
          <svg class="ml-[1px]" width="14" height="11" viewBox="0 0 14 11"><path d="M0.500 10.500V0.500H5L6.500 2.500H13.500V10.500Z" fill="#eee" stroke="#444"/></svg>
          <svg class="ml-[2px]" width="12" height="12" viewBox="0 0 12 12"><rect x="0.500" y="0.500" width="11" height="11" fill="#eee" stroke="#444"/><path d="M7 7h4v4H7z" fill="#333"/></svg>
          <svg class="ml-[3px]" width="12" height="13" viewBox="0 0 12 13"><path d="M2 3h8l-1 9H3Z" fill="#ddd" stroke="#333"/><path d="M1 2.500h10M4.500 1h3M5 5v5M7 5v5" stroke="#333"/></svg>
        </div>
      </div>
    </div>

    <div class="w-[2px] bg-[#eee] ml-px"></div>
  </div>

  <!-- bottom window edge -->
  <div class="flex-1 border-t-[3px] border-t-[#ececec] bg-[#5d7c9a]"></div>

  <!-- left and right window edge -->
  <div class="absolute left-0 top-0 w-[4px] h-full bg-[#e6e6e6] border-l-2 border-l-[#5d7c9a]"></div>
  <div class="absolute right-0 top-0 w-[2px] h-full bg-[#5d7c9a]"></div>

  <!-- baidu watermark -->
  <div class="absolute left-[984px] top-[850px] w-[226px] h-[106px] text-white/65 pointer-events-none select-none">
    <svg class="absolute left-0 top-0" width="226" height="80" viewBox="0 0 226 80">
      <g fill="#fff" fill-opacity="0.62">
        <ellipse cx="86" cy="27" rx="9" ry="13" transform="rotate(-25 86 27)"/>
        <ellipse cx="102" cy="10" rx="9" ry="12"/>
        <ellipse cx="120" cy="12" rx="9" ry="12" transform="rotate(10 120 12)"/>
        <ellipse cx="134" cy="32" rx="9" ry="12" transform="rotate(25 134 32)"/>
        <path d="M112 30C126 30 127 42 134 48C144 56 140 72 125 72C117 72 103 70 94 72C80 74 78 58 87 48C97 41 98 30 112 30Z"/>
      </g>
    </svg>
    <span class="absolute left-[-2px] top-[23px] text-[51px] leading-[56px] font-bold font-['Liberation_Sans',sans-serif]">Bai</span>
    <span class="absolute left-[88px] top-[34px] text-[35px] leading-[38px] font-bold text-[#bdbdbd] font-['Liberation_Sans',sans-serif]">du</span>
    <span class="absolute left-[146px] top-[30px] text-[38px] leading-[44px] font-bold font-['Noto_Sans_CJK_SC',sans-serif]">经验</span>
    <span class="absolute left-0 top-[76px] text-[28px] leading-[32px] font-['Liberation_Sans',sans-serif] whitespace-nowrap">jingyan.baidu.com</span>
  </div>
</div>

<script>
  // rulers: one unit is 31.75px across and 31.7px down
  var NS = 'http://www.w3.org/2000/svg';
  function addPath(svg, d, dash) {
    var p = document.createElementNS(NS, 'path');
    p.setAttribute('d', d);
    p.setAttribute('stroke', '#111');
    p.setAttribute('fill', 'none');
    p.setAttribute('shape-rendering', 'crispEdges');
    if (dash) p.setAttribute('stroke-dasharray', '1 1');
    svg.appendChild(p);
  }
  function addText(svg, x, y, s) {
    var t = document.createElementNS(NS, 'text');
    t.setAttribute('x', x);
    t.setAttribute('y', y);
    t.setAttribute('font-size', '10');
    t.setAttribute('font-family', 'Liberation Sans, sans-serif');
    t.setAttribute('fill', '#111');
    t.textContent = s;
    svg.appendChild(t);
  }
  var rx = document.getElementById('rulerX');
  var d = 'M0 15.500H934M16 0V16';
  for (var i = 0; i < 120; i++) {
    var x = Math.round(7.5 + i * 7.94) + 0.5;
    if (x > 934 || x < 17) continue;
    var h = i % 8 == 0 ? 16 : (i % 4 == 0 ? 7 : 4);
    d += 'M' + x + ' ' + (16 - h) + 'V16';
    if (i % 8 == 0) addText(rx, x + 1, 10, String(i / 4));
  }
  addPath(rx, d);
  addPath(rx, 'M0 11.500H16M12.500 0V16', true);

  var ry = document.getElementById('rulerY');
  d = 'M15.500 0V836';
  for (var j = -12; j < 120; j++) {
    var y = Math.round(96 + j * 7.925) + 0.5;
    if (y < 0 || y > 836) continue;
    var w = j % 8 == 0 ? 16 : (j % 4 == 0 ? 7 : 4);
    d += 'M' + (16 - w) + ' ' + y + 'H16';
    if (j % 8 == 0) {
      var label = String(Math.abs(j / 4));
      for (var k = 0; k < label.length; k++) addText(ry, 2, y + 10 + k * 11, label[k]);
    }
  }
  addPath(ry, d);
</script>
</body>
</html>
